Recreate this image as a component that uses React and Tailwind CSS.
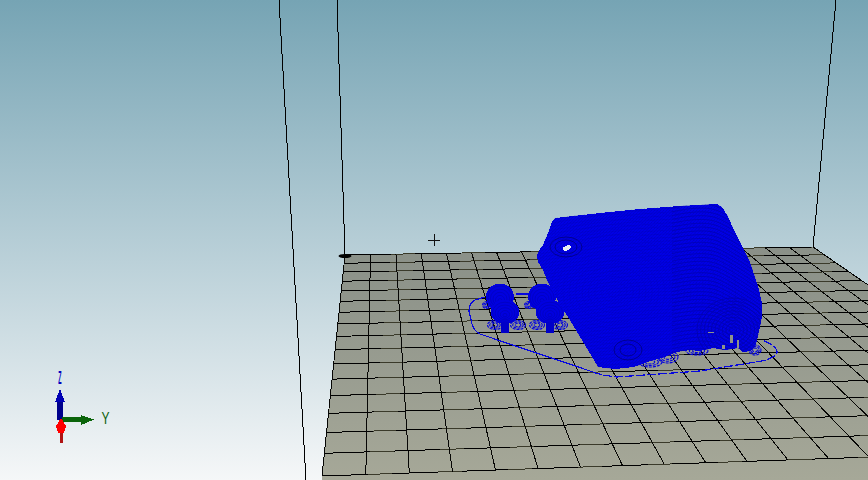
import React from "react";

// Floor homography: unit square -> image quad
function makeH(p0, p1, p2, p3) {
  const dx1 = p1[0] - p2[0], dx2 = p3[0] - p2[0], sx = p0[0] - p1[0] + p2[0] - p3[0];
  const dy1 = p1[1] - p2[1], dy2 = p3[1] - p2[1], sy = p0[1] - p1[1] + p2[1] - p3[1];
  const den = dx1 * dy2 - dx2 * dy1;
  const g = (sx * dy2 - dx2 * sy) / den;
  const h = (dx1 * sy - sx * dy1) / den;
  const a = p1[0] - p0[0] + g * p1[0], b = p3[0] - p0[0] + h * p3[0], c = p0[0];
  const d = p1[1] - p0[1] + g * p1[1], e = p3[1] - p0[1] + h * p3[1], f = p0[1];
  return (u, v) => {
    const w = g * u + h * v + 1;
    return [(a * u + b * v + c) / w, (d * u + e * v + f) / w];
  };
}

const COLS = 19;
const ROWS = 16;
const H = makeH([345, 255], [813, 247], [1106, 449], [322, 476]);

const cols = [];
for (let i = 0; i <= COLS; i++) cols.push({ k: i, a: H(i / COLS, 0), b: H(i / COLS, 1) });
const rows = [];
for (let j = 0; j <= ROWS; j++) rows.push({ k: j, a: H(0, j / ROWS), b: H(1, j / ROWS) });

const BODY =
  "552,222 555,218 600,213 640,209 680,206 700,205 717,204 722,207 727,215 735,232 743,248 750,262 755,277 759,290 762,303 762,316 760,327 757,340 755,347 750,351 743,352 738,348 725,350 713,348 700,351 690,350 677,352 662,358 650,361 640,365 633,367 615,369 598,367 594,360 585,345 570,320 560,305 552,290 547,280 543,270 538,262 537,255 540,249 543,245 546,238 548,233";

// Layer lines on the far shoulder of the model, where they read as stripes
const shoulder = [];
for (let i = 0; i < 40; i++) {
  const y = 206 + i * 3.8;
  shoulder.push(`M672 ${y + 2} C 690 ${y - 2}, 705 ${y - 3}, 715 ${y} S 745 ${y + 16}, 770 ${y + 34}`);
}
// Fainter layer lines across the whole body
const contours = [];
for (let i = 0; i < 54; i++) {
  const y = 206 + i * 3.6;
  contours.push(`M540 ${y + 12} C 600 ${y + 1}, 640 ${y - 4}, 680 ${y - 5}`);
}
const rings = [];
for (let i = 1; i < 20; i++) rings.push([614, 292, i * 6.4, i * 5.2]);
const rings2 = [];
for (let i = 1; i < 11; i++) rings2.push([733, 330, i * 3.6, i * 3.2]);

function Sphere({ cx, cy, rx, ry }) {
  const n = [];
  for (let q = 0.86; q > 0.1; q -= 0.18) n.push(q);
  return (
    <g>
      <ellipse cx={cx} cy={cy} rx={rx} ry={ry} fill="#0000e0" shapeRendering="crispEdges" />
      {n.map((q, i) => (
        <ellipse key={i} cx={cx} cy={cy + (1 - q) * ry * 0.3} rx={rx * q} ry={ry * q} fill="none" stroke="#0000b4" strokeWidth="0.6" />
      ))}
    </g>
  );
}

function Pad({ cx, cy, rx, ry }) {
  const n = [1, 0.7, 0.4];
  return (
    <g fill="none" stroke="#0000e0" strokeWidth="1.1" strokeDasharray="3 1">
      {n.map((t, i) => (
        <ellipse key={i} cx={cx} cy={cy} rx={rx * t} ry={ry * t} />
      ))}
    </g>
  );
}

function Figure({ x, y, dx }) {
  return (
    <g>
      <Pad cx={x - 13} cy={y + 10} rx={4.5} ry={3.5} />
      <Pad cx={x - 5} cy={y + 30} rx={7.5} ry={4.5} />
      <Pad cx={x + 18} cy={y + 30} rx={7.5} ry={4.5} />
      <Sphere cx={x} cy={y + 2} rx={14} ry={13.5} />
      <Sphere cx={x + dx} cy={y + 17} rx={14.5} ry={12} />
      <rect x={x + dx - 4} y={y + 28} width={8} height={10} fill="#0000c8" />
    </g>
  );
}

export default function App() {
  return (
    <div className="relative w-[868px] h-[480px] overflow-hidden bg-gradient-to-b from-[#76a4b4] to-[#f5f7f8]">
      <svg className="block w-full h-full" viewBox="0 0 868 480" xmlns="http://www.w3.org/2000/svg">
        <defs>
          <linearGradient id="floor" x1="0" y1="247" x2="0" y2="480" gradientUnits="userSpaceOnUse">
            <stop offset="0" stopColor="#8a9088" />
            <stop offset="1" stopColor="#a6a898" />
          </linearGradient>
          <clipPath id="body">
            <polygon points={BODY} />
          </clipPath>
          <pattern id="dither" x="0" y="0" width="3" height="3" patternUnits="userSpaceOnUse">
            <rect x="0" y="0" width="1" height="1" fill="#0000a8" />
            <rect x="2" y="1" width="1" height="1" fill="#0000b8" />
            <rect x="1" y="2" width="1" height="1" fill="#0000c4" />
          </pattern>
        </defs>

        {/* Build volume walls */}
        <g stroke="#000" strokeWidth="1" shapeRendering="crispEdges">
          <line x1="279" y1="0" x2="306" y2="480" />
          <line x1="337" y1="0" x2="345" y2="255" />
          <line x1="836" y1="0" x2="813" y2="247" />
        </g>

        {/* Bed */}
        <polygon points="345,255 813,247 868,285 868,480 322,480" fill="url(#floor)" shapeRendering="crispEdges" />
        <g strokeWidth="1" shapeRendering="crispEdges">
          {rows.map((l) => (
            <g key={l.k}>
              <line x1={l.a[0]} y1={l.a[1]} x2={l.b[0]} y2={l.b[1]} stroke="#3a3a2a" />
              <line x1={l.a[0]} y1={l.a[1]} x2={l.b[0]} y2={l.b[1]} stroke="#000" strokeDasharray="46 24" />
            </g>
          ))}
          {cols.map((l) => (
            <line key={l.k} x1={l.a[0]} y1={l.a[1]} x2={l.b[0]} y2={l.b[1]} stroke="#060604" />
          ))}
        </g>
        <ellipse cx="345" cy="256" rx="6.5" ry="2" fill="#000" />

        {/* Cursor */}
        <g stroke="#111" strokeWidth="1" shapeRendering="crispEdges">
          <line x1="428" y1="240" x2="440" y2="240" />
          <line x1="434" y1="234" x2="434" y2="246" />
        </g>

        {/* Skirt */}
        <g fill="none" stroke="#0606e0" strokeWidth="1.2" shapeRendering="crispEdges">
          <path d="M485 297 L475 300 Q469 303 469 311 L472 324 Q474 331 480 334 L593 372" />
          <path d="M593 372 Q600 375 617 377 L700 371 L762 361 Q778 357 777 351 Q775 345 762 340" strokeDasharray="9 2" />
          <line x1="516" y1="294" x2="528" y2="294" />
        </g>

        {/* Small parts */}
        <Figure x={500} y={295} dx={5} />
        <Figure x={542} y={295} dx={8} />

        {/* Pads under model */}
        <Pad cx={650} cy={362} rx={12} ry={5} />
        <Pad cx={668} cy={357} rx={10} ry={6} />
        <Pad cx={697} cy={351} rx={11} ry={4} />
        <Pad cx={755} cy={350} rx={6} ry={5} />

        {/* Model */}
        <polygon points={BODY} fill="#0000e6" shapeRendering="crispEdges" />
        <g clipPath="url(#body)" fill="none">
          <rect x="530" y="200" width="240" height="175" fill="url(#dither)" opacity="0.4" />
          <g stroke="#0000c4" strokeWidth="0.7" opacity="0.7">
            {contours.map((d, i) => (
              <path key={i} d={d} />
            ))}
          </g>
          <g stroke="#0000bc" strokeWidth="1">
            {shoulder.map((d, i) => (
              <path key={i} d={d} />
            ))}
          </g>
          <g stroke="#0000c0" strokeWidth="0.6" opacity="0.45">
            {rings.map((r, i) => (
              <ellipse key={i} cx={r[0]} cy={r[1]} rx={r[2]} ry={r[3]} />
            ))}
          </g>
          <g stroke="#0000b0" strokeWidth="0.8">
            {rings2.map((r, i) => (
              <ellipse key={i} cx={r[0]} cy={r[1]} rx={r[2]} ry={r[3]} />
            ))}
          </g>
          <g stroke="#000090" strokeWidth="1">
            <ellipse cx="566" cy="247" rx="16" ry="10" />
            <ellipse cx="566" cy="247" rx="11" ry="7" />
            <ellipse cx="628" cy="350" rx="14" ry="10" />
            <ellipse cx="628" cy="350" rx="8" ry="6" />
          </g>
        </g>
        <ellipse cx="567" cy="248" rx="4" ry="2.4" fill="#e6eef0" transform="rotate(-20 567 248)" shapeRendering="crispEdges" />
        <g fill="#8f9488" shapeRendering="crispEdges">
          <rect x="708" y="332" width="6" height="1" />
          <rect x="730" y="335" width="3" height="8" />
          <rect x="737" y="340" width="2" height="8" />
          <rect x="722" y="345" width="3" height="4" />
        </g>

        {/* Axis triad */}
        <g shapeRendering="crispEdges">
          <rect x="57" y="401" width="6" height="19" fill="#00008c" />
          <polygon points="60,389 65,402 55,402" fill="#0000b4" />
          <rect x="62" y="417" width="20" height="5" fill="#0a640a" />
          <polygon points="81,415 94,419.5 81,425" fill="#0a640a" />
          <rect x="60" y="430" width="3" height="13" fill="#b01414" />
          <polygon points="61,418 66,426 64,433 58,433 56,426" fill="#ff0000" />
        </g>
        <text
          transform="translate(105.5 424) scale(0.75 1)"
          textAnchor="middle"
          fontFamily="'Liberation Sans', sans-serif"
          fontSize="16"
          fill="#0b5f0b"
        >
          Y
        </text>
        <text
          transform="translate(60 384) scale(0.3 1)"
          textAnchor="middle"
          fontFamily="'Liberation Sans', sans-serif"
          fontWeight="700"
          fontSize="18"
          fill="#0000c0"
        >
          Z
        </text>
      </svg>
    </div>
  );
}
